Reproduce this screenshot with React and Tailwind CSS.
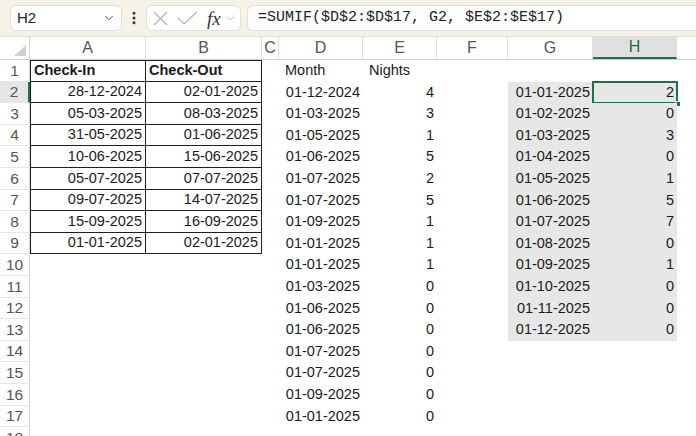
import React from "react";
import { ChevronDown, EllipsisVertical } from "lucide-react";

const COLS = [
  { k: "A", w: "w-[116px]" },
  { k: "B", w: "w-[116px]" },
  { k: "C", w: "w-[17px]" },
  { k: "D", w: "w-[84px]" },
  { k: "E", w: "w-[74px]" },
  { k: "F", w: "w-[71px]" },
  { k: "G", w: "w-[85px]" },
  { k: "H", w: "w-[84px]" },
];

const HEIGHTS = [
  "h-[22px]", "h-[21px]", "h-[22px]", "h-[21px]", "h-[22px]", "h-[22px]",
  "h-[21px]", "h-[22px]", "h-[21px]", "h-[22px]", "h-[22px]", "h-[21px]",
  "h-[22px]", "h-[21px]", "h-[22px]", "h-[22px]", "h-[21px]", "h-[22px]",
];

const AB = [
  ["28-12-2024", "02-01-2025"],
  ["05-03-2025", "08-03-2025"],
  ["31-05-2025", "01-06-2025"],
  ["10-06-2025", "15-06-2025"],
  ["05-07-2025", "07-07-2025"],
  ["09-07-2025", "14-07-2025"],
  ["15-09-2025", "16-09-2025"],
  ["01-01-2025", "02-01-2025"],
];

const DE = [
  ["01-12-2024", "4"], ["01-03-2025", "3"], ["01-05-2025", "1"], ["01-06-2025", "5"],
  ["01-07-2025", "2"], ["01-07-2025", "5"], ["01-09-2025", "1"], ["01-01-2025", "1"],
  ["01-01-2025", "1"], ["01-03-2025", "0"], ["01-06-2025", "0"], ["01-06-2025", "0"],
  ["01-07-2025", "0"], ["01-07-2025", "0"], ["01-09-2025", "0"], ["01-01-2025", "0"],
];

const GH = [
  ["01-01-2025", "2"], ["01-02-2025", "0"], ["01-03-2025", "3"], ["01-04-2025", "0"],
  ["01-05-2025", "1"], ["01-06-2025", "5"], ["01-07-2025", "7"], ["01-08-2025", "0"],
  ["01-09-2025", "1"], ["01-10-2025", "0"], ["01-11-2025", "0"], ["01-12-2025", "0"],
];

function cellData(r, k) {
  if (k === "A") {
    if (r === 1) return { t: "Check-In", bold: true };
    if (r <= 9) return { t: AB[r - 2][0], right: true };
  }
  if (k === "B") {
    if (r === 1) return { t: "Check-Out", bold: true };
    if (r <= 9) return { t: AB[r - 2][1], right: true };
  }
  if (k === "D") {
    if (r === 1) return { t: "Month", indent: true };
    if (r <= 17) return { t: DE[r - 2][0], right: true };
  }
  if (k === "E") {
    if (r === 1) return { t: "Nights", left: true };
    if (r <= 17) return { t: DE[r - 2][1], right: true };
  }
  if (k === "G" && r >= 2 && r <= 13) return { t: GH[r - 2][0], right: true };
  if (k === "H" && r >= 2 && r <= 13) return { t: GH[r - 2][1], right: true };
  return null;
}

function Cell({ r, col }) {
  const d = cellData(r, col.k);
  const boxed = (col.k === "A" || col.k === "B") && r <= 9;
  const grey = (col.k === "G" || col.k === "H") && r >= 2 && r <= 13;
  const cls = [
    "relative flex items-center shrink-0 h-full",
    col.w,
    boxed ? "border-r border-b border-[#1f1f1f]" : "",
    boxed && col.k === "A" ? "border-l" : "",
    boxed && r === 1 ? "border-t" : "",
    grey ? "bg-[#e7e7e7]" : "",
    d && d.right ? "justify-end pr-[3px]" : "",
    d && d.bold ? "pl-[3px] font-bold" : "",
    d && d.indent ? "pl-[6px]" : "",
    d && d.left ? "pl-[6px]" : "",
  ].join(" ");
  return (
    <div className={cls}>
      {d ? <span className="whitespace-nowrap">{d.t}</span> : null}
      {col.k === "H" && r === 2 ? (
        <>
          <div className="absolute top-[-1px] left-[-1px] right-[-1px] bottom-[-1px] border-2 border-[#1e7145]" />
          <div className="absolute right-[-4px] bottom-[-4px] w-[6px] h-[6px] bg-[#1e7145] border border-white" />
        </>
      ) : null}
    </div>
  );
}

export default function App() {
  const rows = Array.from({ length: 18 }, (_, i) => i + 1);
  return (
    <div className="w-[696px] h-[436px] overflow-hidden bg-white text-[#1a1a1a] font-['Liberation_Sans',Arial,sans-serif]">
      {/* Formula bar */}
      <div className="h-[37px] bg-[#f6f2e7] border-b border-[#e4dfd2] flex items-center pl-[10px]">
        <div className="w-[112px] h-[26px] bg-white border border-[#e4dfd2] rounded-[6px] flex items-center justify-between pl-[6px] pr-[5px]">
          <span className="text-[15px] text-[#222]">H2</span>
          <ChevronDown size={14} strokeWidth={1.6} className="text-[#444]" />
        </div>
        <div className="w-[24px] flex justify-center">
          <EllipsisVertical size={16} strokeWidth={2.6} className="text-[#333]" />
        </div>
        <div className="w-[95px] h-[26px] bg-white border border-[#e4dfd2] rounded-[6px] flex items-center pl-[6px]">
          <svg width="15" height="15" viewBox="0 0 15 15" className="shrink-0">
            <path d="M1 1 L14 14 M14 1 L1 14" stroke="#b4b4b4" strokeWidth="1.2" fill="none" />
          </svg>
          <svg width="21" height="14" viewBox="0 0 21 14" className="shrink-0 ml-[9px]">
            <path d="M1 7 L7 13 L20 1" stroke="#b4b4b4" strokeWidth="1.2" fill="none" />
          </svg>
          <span className="ml-[9px] text-[19px] italic text-[#333] font-['Liberation_Serif',serif] leading-none">fx</span>
          <ChevronDown size={13} strokeWidth={1.3} className="text-[#9a9a9a] ml-[3px]" />
        </div>
        <div className="ml-[6px] flex-1 h-[26px] bg-white border border-[#e4dfd2] border-r-0 rounded-l-[6px] flex items-center pl-[10px]">
          <span className="font-['Liberation_Mono',monospace] text-[15px] text-[#222] whitespace-nowrap">
            =SUMIF($D$2:$D$17, G2, $E$2:$E$17)
          </span>
        </div>
      </div>

      {/* Column headers */}
      <div className="flex h-[23px] border-b border-[#cfcfcf] text-[16px] text-[#555]">
        <div className="relative w-[30px] shrink-0 border-r border-[#d6d6d6]">
          <svg className="absolute right-[3px] bottom-[3px]" width="12" height="11" viewBox="0 0 12 11">
            <polygon points="12,0 12,11 0,11" fill="#cfcfcf" />
          </svg>
        </div>
        {COLS.map((c) => (
          <div
            key={c.k}
            className={
              "shrink-0 flex items-center justify-center border-r border-[#dedede] " +
              c.w +
              (c.k === "H" ? " bg-[#e0e0e0] text-[#1e6b41] border-b-2 border-b-[#1e7145]" : "")
            }
          >
            {c.k}
          </div>
        ))}
        <div className="flex-1" />
      </div>

      {/* Rows */}
      {rows.map((r) => (
        <div key={r} className={"flex text-[14.5px] " + HEIGHTS[r - 1]}>
          <div
            className={
              "w-[30px] shrink-0 flex items-center justify-center text-[15.5px] text-[#555] border-b border-[#e6e6e6] " +
              (r === 2 ? "bg-[#e6e6e6] border-r-2 border-r-[#1e7145]" : "border-r border-r-[#d6d6d6]")
            }
          >
            {r}
          </div>
          {COLS.map((c) => (
            <Cell key={c.k} r={r} col={c} />
          ))}
          <div className="flex-1" />
        </div>
      ))}
    </div>
  );
}
